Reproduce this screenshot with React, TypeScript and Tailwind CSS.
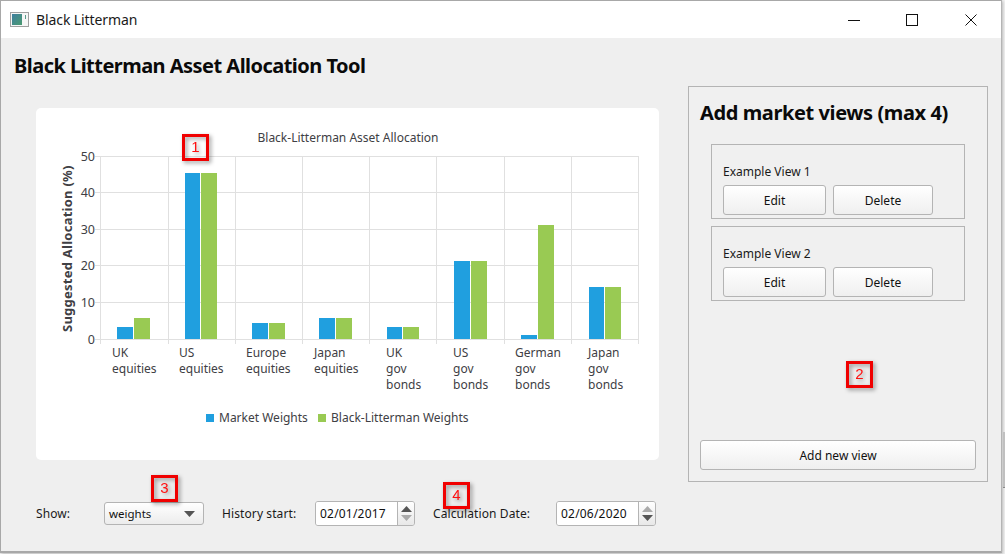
const uiFont = "font-['Noto_Sans',sans-serif]";

const categories = [
  { lines: ["UK", "equities"], x: 112, blue: [117, 327], green: [134, 318] },
  { lines: ["US", "equities"], x: 179, blue: [185, 173], green: [201, 173] },
  { lines: ["Europe", "equities"], x: 246, blue: [252, 323], green: [269, 323] },
  { lines: ["Japan", "equities"], x: 314, blue: [319, 318], green: [336, 318] },
  { lines: ["UK", "gov", "bonds"], x: 386, blue: [387, 327], green: [403, 327] },
  { lines: ["US", "gov", "bonds"], x: 453, blue: [454, 261], green: [471, 261] },
  { lines: ["German", "gov", "bonds"], x: 515, blue: [521, 335], green: [538, 225] },
  { lines: ["Japan", "gov", "bonds"], x: 588, blue: [589, 287], green: [605, 287] },
];

const gridX = [100, 168, 235, 302, 369, 436, 504, 571, 638];
const gridY = [
  { y: 156, label: "50" },
  { y: 192, label: "40" },
  { y: 229, label: "30" },
  { y: 265, label: "20" },
  { y: 302, label: "10" },
  { y: 339, label: "0" },
];

function Chart() {
  return (
    <svg width="623" height="352" viewBox="36 108 623 352" className="block" fontFamily="'Noto Sans', sans-serif">
      <text x="348" y="142" textAnchor="middle" fontSize="12" fill="#404044">Black-Litterman Asset Allocation</text>
      {gridX.map((x) => (
        <rect key={x} x={x} y={156} width={1} height={188} fill="#e0e0e0" />
      ))}
      {gridY.map((g) => (
        <g key={g.y}>
          <rect x={95} y={g.y} width={544} height={1} fill="#e0e0e0" />
          <text x={95} y={g.y + 5} textAnchor="end" fontSize="12.5" fill="#404044">{g.label}</text>
        </g>
      ))}
      {categories.map((c) => (
        <g key={c.x}>
          <rect x={c.blue[0]} y={c.blue[1]} width={c.green[0] - c.blue[0] - 1} height={339 - c.blue[1]} fill="#209fdf" />
          <rect x={c.green[0]} y={c.green[1]} width={16} height={339 - c.green[1]} fill="#99ca53" />
          {c.lines.map((line, i) => (
            <text key={line} x={c.x} y={357 + i * 16} fontSize="12" fill="#404044">{line}</text>
          ))}
        </g>
      ))}
      <text transform="translate(72 332) rotate(-90)" fontSize="13" letterSpacing="0.25" fontWeight="700" fill="#404044">Suggested Allocation (%)</text>
      <rect x="206" y="414" width="8" height="8" fill="#209fdf" />
      <text x="219" y="422" fontSize="12" fill="#404044">Market Weights</text>
      <rect x="318" y="414" width="8" height="8" fill="#99ca53" />
      <text x="331" y="422" fontSize="12" fill="#404044">Black-Litterman Weights</text>
    </svg>
  );
}

function PushButton({ label, className }: { label: string; className: string }) {
  return (
    <button className={`h-[30px] rounded-[3px] border border-[#b4b4b4] bg-linear-to-b from-white to-[#efefef] pt-px text-[12px] text-[#111] ${className}`}>
      {label}
    </button>
  );
}

function ViewBox({ label }: { label: string }) {
  return (
    <div className="h-[75px] w-[254px] border border-[#b4b4b4] pl-[11px]">
      <div className="mt-[18px] h-[22px] text-[12px] leading-[18px] text-[#1a1a1a]">{label}</div>
      <div className="flex gap-[7px]">
        <PushButton label="Edit" className="w-[103px]" />
        <PushButton label="Delete" className="w-[100px]" />
      </div>
    </div>
  );
}

function SpinBox({ value, dimDown }: { value: string; dimDown?: boolean }) {
  return (
    <div className="flex h-[25px] w-[100px] overflow-hidden rounded-[3px] border border-[#b4b4b4]">
      <div className="flex w-[81px] items-center bg-white pl-[4px] text-[12px] tracking-[0.2px] text-[#111]">{value}</div>
      <div className="flex flex-1 flex-col items-center justify-center gap-[3px] border-l border-[#b4b4b4] bg-linear-to-b from-white to-[#e8e8e8]">
        <svg width="11" height="6" viewBox="0 0 11 6">
          <path d="M5.5 0 11 6H0z" fill={dimDown ? "#555" : "#aaa"} />
        </svg>
        <svg width="11" height="6" viewBox="0 0 11 6">
          <path d="M0 0h11L5.5 6z" fill={dimDown ? "#aaa" : "#555"} />
        </svg>
      </div>
    </div>
  );
}

function Badge({ n, className }: { n: number; className: string }) {
  return (
    <div className={`absolute flex h-[27px] w-[27px] items-center justify-center border-[3px] border-[#f00000] font-['Liberation_Sans',sans-serif] text-[15px] text-[#ff1010] drop-shadow-[2px_2px_2px_rgba(0,0,0,0.4)] ${className}`}>
      {n}
    </div>
  );
}

export default function App() {
  return (
    <div className={`relative h-[554px] w-[1005px] overflow-hidden bg-[#f4f4f4] ${uiFont}`}>
      <div className="relative flex h-[553px] w-[1002px] flex-col border-t border-r border-b-2 border-l border-[#a8a8a8] border-r-[#b4b4b4] bg-[#efefef] shadow-[1px_1px_3px_rgba(0,0,0,0.25)]">
        {/* title bar */}
        <div className="flex h-[37px] shrink-0 items-center bg-white">
          <svg width="19" height="15" viewBox="0 0 19 15" className="ml-[9px]">
            <defs>
              <linearGradient id="icon-fill" x1="0" y1="0" x2="1" y2="1">
                <stop offset="0" stopColor="#3f7fa0" />
                <stop offset="1" stopColor="#4a9a70" />
              </linearGradient>
            </defs>
            <rect x="0.5" y="0.5" width="18" height="14" fill="#f6f6f6" stroke="#a0a0a0" />
            <rect x="2" y="2" width="10" height="11" fill="url(#icon-fill)" />
            <rect x="15" y="3" width="1" height="4" fill="#5a9a8a" />
          </svg>
          <span className="ml-[7px] text-[14px] tracking-[-0.1px] text-[#1a1a1a]">Black Litterman</span>
          <div className="ml-auto flex items-center">
            <svg width="12" height="12" viewBox="0 0 12 12" className="mr-[46px]">
              <path d="M0 6.5h12" stroke="#111" />
            </svg>
            <svg width="12" height="12" viewBox="0 0 12 12" className="mr-[47px]">
              <rect x="0.5" y="0.5" width="11" height="11" fill="none" stroke="#111" />
            </svg>
            <svg width="12" height="12" viewBox="0 0 12 12" className="mr-[24px]">
              <path d="M0.5 0.5l11 11M11.5 0.5l-11 11" stroke="#111" />
            </svg>
          </div>
        </div>

        <div className="flex flex-1">
          {/* left column */}
          <div className="w-[687px] shrink-0">
            <h1 className="mt-[13px] ml-[13px] h-[30px] text-[20px] leading-[30px] font-bold tracking-[-0.53px] whitespace-nowrap text-[#0a0a0a]">
              Black Litterman Asset Allocation Tool
            </h1>
            <div className="mt-[27px] ml-[35px] h-[352px] w-[623px] overflow-hidden rounded-[5px] bg-white">
              <Chart />
            </div>
            <div className="mt-[41px] ml-[35px] flex h-[25px] items-center text-[12px] tracking-[0.1px] text-[#1a1a1a]">
              <span className="w-[68px]">Show:</span>
              <div className="flex h-[23px] w-[100px] items-center justify-between rounded-[3px] border border-[#b4b4b4] bg-linear-to-b from-white to-[#ececec] pr-[8px] pl-[4px] text-[11.5px] tracking-normal text-[#111]">
                weights
                <svg width="11" height="6" viewBox="0 0 11 6">
                  <path d="M0 0h11L5.5 6z" fill="#555" />
                </svg>
              </div>
              <span className="ml-[18px] w-[93px]">History start:</span>
              <SpinBox value="02/01/2017" dimDown />
              <span className="ml-[18px] w-[123px]">Calculation Date:</span>
              <SpinBox value="02/06/2020" />
            </div>
          </div>

          {/* market views panel */}
          <div className="mt-[48px] flex h-[396px] w-[300px] flex-col border border-[#b4b4b4] bg-[#f0f0f0] px-[11px]">
            <h2 className="mt-[11px] h-[30px] text-[20px] leading-[30px] font-bold tracking-[-0.4px] whitespace-nowrap text-[#0a0a0a]">
              Add market views (max 4)
            </h2>
            <div className="mt-[16px] ml-[11px] flex flex-col gap-[7px]">
              <ViewBox label="Example View 1" />
              <ViewBox label="Example View 2" />
            </div>
            <PushButton label="Add new view" className="mt-auto mb-[11px] w-[276px] shrink-0" />
          </div>
        </div>

        <Badge n={1} className="top-[133px] left-[181px]" />
        <Badge n={2} className="top-[360px] left-[845px]" />
        <Badge n={3} className="top-[474px] left-[150px]" />
        <Badge n={4} className="top-[481px] left-[442px]" />
      </div>
      {/* edge of the window behind */}
      <div className="absolute top-[432px] left-[1003px] h-[56px] w-[2px] border-b border-[#888] bg-[#c0c0c0]" />
    </div>
  );
}
